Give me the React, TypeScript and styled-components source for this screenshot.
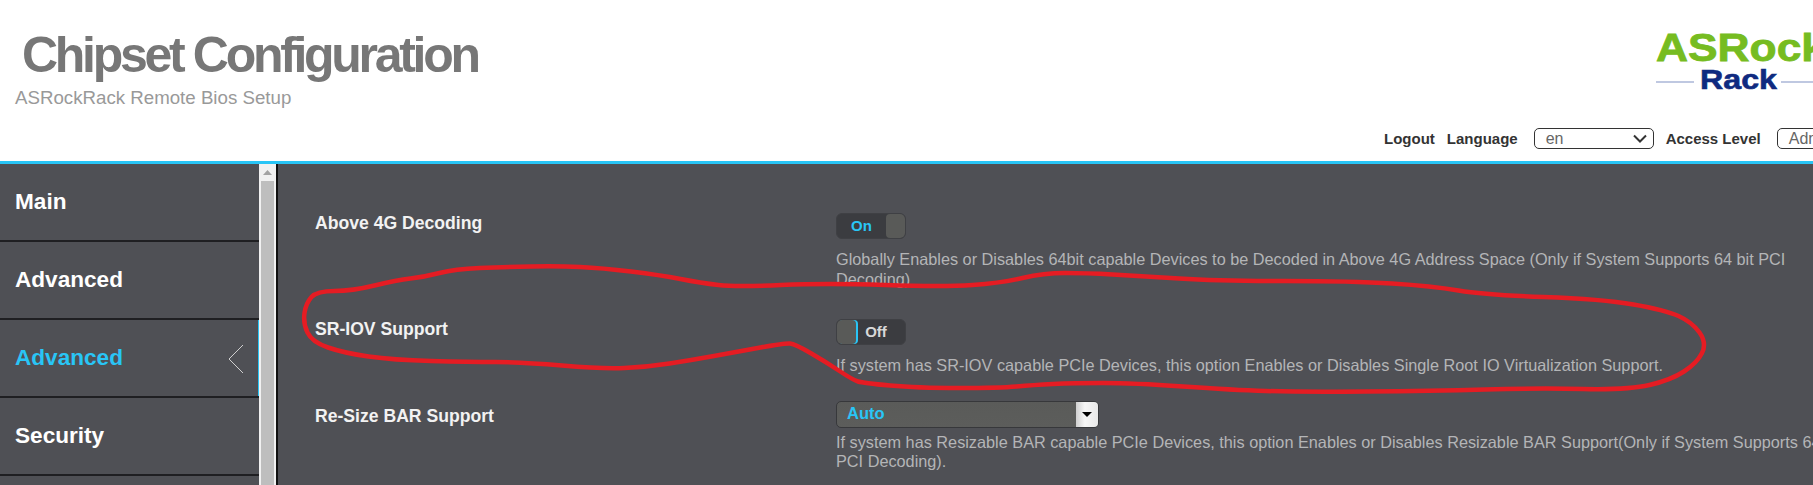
import styled, { createGlobalStyle } from "styled-components";

const GlobalStyle = createGlobalStyle`
  html, body {
    margin: 0;
    padding: 0;
    height: 485px;
    overflow: hidden;
    background: #fff;
    font-family: "Liberation Sans", Arial, sans-serif;
  }
`;

const Page = styled.div`
  position: relative;
  width: 1813px;
  height: 485px;
  overflow: hidden;
`;

const Header = styled.header`
  position: relative;
  display: flex;
  justify-content: space-between;
  width: 1900px;
  height: 161px;
  box-sizing: border-box;
  background: #fff;
`;

const Brand = styled.div`
  padding: 28px 0 0 15px;
`;

const Title = styled.h1`
  margin: 0 0 0 7px;
  font-size: 50px;
  line-height: 54px;
  font-weight: bold;
  letter-spacing: -3.3px;
  color: #777;
`;

const Subtitle = styled.div`
  margin-top: 6px;
  font-size: 18.7px;
  line-height: 20px;
  color: #999;
`;

const HeaderRight = styled.div`
  display: flex;
  flex-direction: column;
  align-items: flex-start;
  width: 516px;
  padding-top: 31px;
  box-sizing: border-box;
`;

const LogoBox = styled.div`
  margin-left: 272px;
  height: 65px;
`;

const Toolbar = styled.div`
  display: flex;
  align-items: center;
  margin-top: 32px;
  font-size: 15px;
  font-weight: bold;
  color: #333;
`;

const ToolLabel = styled.span<{ $gap: number }>`
  margin-right: ${({ $gap }) => $gap}px;
  white-space: nowrap;
`;

const ToolSelect = styled.div<{ $width: number; $gap: number }>`
  display: flex;
  align-items: center;
  justify-content: space-between;
  width: ${({ $width }) => $width}px;
  height: 21px;
  margin-right: ${({ $gap }) => $gap}px;
  padding: 0 6px 0 11px;
  box-sizing: border-box;
  border: 1px solid #333;
  border-radius: 5px;
  font-size: 16px;
  font-weight: normal;
  color: #666;
`;

const Main = styled.div`
  display: flex;
  width: 1900px;
  height: 324px;
  border-top: 3px solid #29c5f6;
  background: #4f5055;
`;

const Sidebar = styled.nav`
  display: flex;
  width: 278px;
  flex: none;
  border-right: 2px solid #111;
  box-sizing: border-box;
`;

const Menu = styled.div`
  width: 259px;
  flex: none;
`;

const MenuItem = styled.div<{ $active?: boolean }>`
  position: relative;
  display: flex;
  align-items: center;
  justify-content: space-between;
  height: 78px;
  padding: 0 15px;
  box-sizing: border-box;
  border-bottom: 2px solid #1f1f22;
  font-size: 22.6px;
  font-weight: bold;
  color: ${({ $active }) => ($active ? "#29c5f6" : "#fff")};
  box-shadow: ${({ $active }) => ($active ? "inset -1px 0 0 #29c5f6" : "none")};
`;

const Chevron = styled.svg`
  position: absolute;
  right: 15px;
  top: 24px;
`;

const ScrollTrack = styled.div`
  display: flex;
  flex-direction: column;
  align-items: center;
  width: 17px;
  background: #f1f1f1;
`;

const ScrollArrow = styled.div`
  height: 17px;
  display: flex;
  align-items: center;
`;

const ScrollThumb = styled.div`
  width: 13px;
  flex: 1;
  background: #bebebe;
`;

const Content = styled.main`
  flex: 1;
  padding: 44px 0 0 37px;
`;

const Row = styled.div`
  display: grid;
  grid-template-columns: 521px 1009px;
  margin-bottom: 25px;
`;

const RowLabel = styled.div`
  padding-top: 5px;
  font-size: 17.6px;
  line-height: 20px;
  font-weight: bold;
  color: #f2f2f2;
`;

const Toggle = styled.div<{ $on?: boolean }>`
  display: flex;
  flex-direction: ${({ $on }) => ($on ? "row" : "row-reverse")};
  align-items: stretch;
  width: 70px;
  height: 26px;
  margin: 5px 0 11px;
  box-sizing: border-box;
  border: 1px solid #3f4044;
  border-radius: 6px;
  background: #3b3c40;
  overflow: hidden;
`;

const ToggleText = styled.span<{ $on?: boolean }>`
  flex: 1;
  padding-right: ${({ $on }) => ($on ? "0" : "11px")};
  font-size: 15px;
  line-height: 24px;
  font-weight: bold;
  text-align: center;
  color: ${({ $on }) => ($on ? "#29c5f6" : "#d8d8d8")};
`;

const ToggleKnob = styled.span<{ $on?: boolean }>`
  width: 19px;
  flex: none;
  background: #595a58;
  border-radius: 4px;
  box-shadow: ${({ $on }) => ($on ? "none" : "2px 0 0 #29c5f6")};
  margin-right: ${({ $on }) => ($on ? "0" : "2px")};
`;

const Dropdown = styled.div`
  display: flex;
  align-items: stretch;
  justify-content: space-between;
  width: 263px;
  height: 27px;
  margin-bottom: 5px;
  box-sizing: border-box;
  border: 1px solid #37383b;
  border-radius: 5px;
  background: linear-gradient(#5a5b59, #5c5d5b);
  overflow: hidden;
`;

const DropdownValue = styled.span`
  padding-left: 10px;
  font-size: 16.5px;
  line-height: 22px;
  font-weight: bold;
  color: #29c5f6;
`;

const DropdownButton = styled.span`
  display: flex;
  align-items: center;
  justify-content: center;
  width: 22px;
  background: linear-gradient(90deg, #cfcfcf, #f6f6f6 40%, #e8e8e8);
`;

const DropdownCaret = styled.span`
  width: 0;
  height: 0;
  border-left: 5px solid transparent;
  border-right: 5px solid transparent;
  border-top: 5px solid #000;
`;

const Description = styled.div`
  font-size: 16.27px;
  line-height: 19.5px;
  color: #b4b5b7;
`;

const Annotation = styled.svg`
  position: absolute;
  left: 0;
  top: 0;
  pointer-events: none;
`;

const loop: [number, number][] = [
  [1001, 283], [1044, 273], [1086, 273], [1139, 276], [1219, 281], [1352, 281], [1432, 286],
  [1485, 295], [1602, 299], [1665, 310], [1692, 322], [1707, 343], [1697, 363], [1671, 380],
  [1628, 390], [1538, 388], [1432, 391], [1299, 392], [1233, 390], [1133, 383], [1073, 383],
  [1033, 385], [1000, 388], [917, 388], [863, 383], [853, 380], [826, 362], [795, 344],
  [785, 343], [736, 352], [692, 360], [647, 367], [602, 369], [522, 362], [469, 362], [393, 360],
  [344, 353], [312, 342], [303, 323], [306, 303], [317, 291], [352, 291], [397, 280], [424, 277],
  [455, 269], [504, 267], [558, 266], [602, 268], [660, 275], [701, 283], [736, 287], [826, 283],
  [944, 287],
];

// midpoint smoothing, good enough for a pen stroke
const smoothPath = (pts: [number, number][]) => {
  const mid = (a: [number, number], b: [number, number]) => `${(a[0] + b[0]) / 2} ${(a[1] + b[1]) / 2}`;
  let d = `M${mid(pts[pts.length - 1], pts[0])}`;
  pts.forEach((p, i) => {
    d += ` Q${p[0]} ${p[1]} ${mid(p, pts[(i + 1) % pts.length])}`;
  });
  return d + "Z";
};

const Logo = () => (
  <svg width="190" height="65" viewBox="0 0 190 65">
    <text
      x="0"
      y="30"
      fontFamily="Liberation Sans"
      fontWeight="bold"
      fontSize="39"
      textLength="170"
      lengthAdjust="spacingAndGlyphs"
      fill="#76bc21"
      stroke="#76bc21"
      strokeWidth="0.8"
    >
      ASRock
    </text>
    <path d="M0 51H38M125 51H190" stroke="#aab6d8" strokeWidth="1.5" fill="none" />
    <text
      x="44"
      y="58"
      fontFamily="Liberation Sans"
      fontWeight="bold"
      fontSize="28"
      textLength="77"
      lengthAdjust="spacingAndGlyphs"
      fill="#0f2a80"
      stroke="#0f2a80"
      strokeWidth="0.6"
    >
      Rack
    </text>
  </svg>
);

const menuItems = ["Main", "Advanced", "Advanced", "Security"];

export default function App() {
  return (
    <Page>
      <GlobalStyle />
      <Header>
        <Brand>
          <Title>Chipset Configuration</Title>
          <Subtitle>ASRockRack Remote Bios Setup</Subtitle>
        </Brand>
        <HeaderRight>
          <LogoBox>
            <Logo />
          </LogoBox>
          <Toolbar>
            <ToolLabel $gap={12}>Logout</ToolLabel>
            <ToolLabel $gap={16}>Language</ToolLabel>
            <ToolSelect $width={120} $gap={12}>
              en
              <svg width="14" height="9" viewBox="0 0 14 9">
                <path d="M1 1.5L7 7.5L13 1.5" stroke="#333" strokeWidth="2" fill="none" />
              </svg>
            </ToolSelect>
            <ToolLabel $gap={16}>Access Level</ToolLabel>
            <ToolSelect $width={100} $gap={0}>
              Admin
            </ToolSelect>
          </Toolbar>
        </HeaderRight>
      </Header>
      <Main>
        <Sidebar>
          <Menu>
            {menuItems.map((label, i) => (
              <MenuItem key={i} $active={i === 2}>
                {label}
                {i === 2 && (
                  <Chevron width="16" height="30" viewBox="0 0 16 30">
                    <path d="M15 1L1 15L15 29" stroke="#cfcfcf" strokeWidth="1" fill="none" />
                  </Chevron>
                )}
              </MenuItem>
            ))}
          </Menu>
          <ScrollTrack>
            <ScrollArrow>
              <svg width="9" height="6" viewBox="0 0 9 6">
                <path d="M4.5 0L9 5H0Z" fill="#a3a3a3" />
              </svg>
            </ScrollArrow>
            <ScrollThumb />
          </ScrollTrack>
        </Sidebar>
        <Content>
          <Row>
            <RowLabel>Above 4G Decoding</RowLabel>
            <div>
              <Toggle $on>
                <ToggleText $on>On</ToggleText>
                <ToggleKnob $on />
              </Toggle>
              <Description>
                Globally Enables or Disables 64bit capable Devices to be Decoded in Above 4G Address Space (Only if
                System Supports 64 bit PCI Decoding)
              </Description>
            </div>
          </Row>
          <Row>
            <RowLabel>SR-IOV Support</RowLabel>
            <div>
              <Toggle>
                <ToggleText>Off</ToggleText>
                <ToggleKnob />
              </Toggle>
              <Description>
                If system has SR-IOV capable PCIe Devices, this option Enables or Disables Single Root IO Virtualization
                Support.
              </Description>
            </div>
          </Row>
          <Row>
            <RowLabel>Re-Size BAR Support</RowLabel>
            <div>
              <Dropdown>
                <DropdownValue>Auto</DropdownValue>
                <DropdownButton>
                  <DropdownCaret />
                </DropdownButton>
              </Dropdown>
              <Description>
                If system has Resizable BAR capable PCIe Devices, this option Enables or Disables Resizable BAR
                Support(Only if System Supports 64 bit PCI Decoding).
              </Description>
            </div>
          </Row>
        </Content>
      </Main>
      <Annotation width="1813" height="485" viewBox="0 0 1813 485">
        <path d={smoothPath(loop)} stroke="#e51c23" strokeWidth="4.5" fill="none" strokeLinejoin="round" />
      </Annotation>
    </Page>
  );
}
